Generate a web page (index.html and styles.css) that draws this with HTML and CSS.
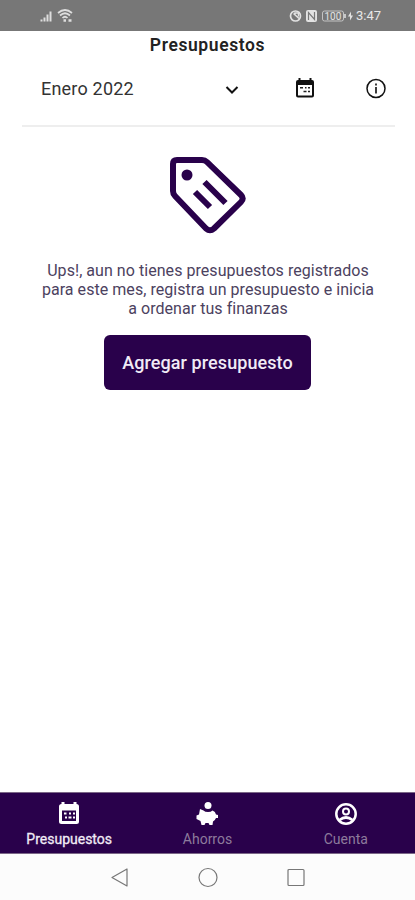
FILE: index.html
```html
<!DOCTYPE html>
<html lang="es">
<head>
<meta charset="utf-8">
<meta name="viewport" content="width=device-width, initial-scale=1">
<title>Presupuestos</title>
<link rel="stylesheet" href="styles.css">
</head>
<body>
<div class="screen">
  <div class="status">
    <svg class="signals" width="34" height="18" viewBox="0 0 34 18" fill="none" stroke="#dedede">
      <path d="M1.500 12.500v2M4.500 10.500v4M7.500 7.500v7M10.500 4.500v10" stroke-width="2"/>
      <path d="M18 6q7-6 14 0M20 8.500q5-4.500 10 0M22.500 11q2.500-2.500 5 0" stroke-width="1.700"/>
      <path d="M23.500 13.500h2.500M28.500 13.500h3" stroke-width="2.500"/>
    </svg>
    <div class="status-right">
      <svg width="66" height="16" viewBox="0 0 66 16" fill="none" stroke="#e2e2e2">
        <circle cx="6.500" cy="8" r="5" stroke-width="1.700"/>
        <path d="M4.500 5.500l5.500 5M6 8V5h3.500v3.500" stroke-width="1.500"/>
        <rect x="17" y="2" width="11" height="12" rx="2" fill="#e2e2e2" stroke="none"/>
        <path d="M19.500 12V4.500l6 7V4" stroke="#777" stroke-width="1.200"/>
        <rect x="33.500" y="3" width="21" height="10" rx="2" stroke-width="1" stroke="#c4c4c4"/>
        <path d="M56 6v4" stroke-width="1.500"/>
        <text x="35.500" y="11.500" class="battery">100</text>
        <path d="M62 3.500l-3 5h2v4l3-5h-2z" fill="#e2e2e2" stroke="none"/>
      </svg>
      <span class="clock">3:47</span>
    </div>
  </div>
  <h1 class="title">Presupuestos</h1>
  <div class="filter">
    <span class="month">Enero 2022</span>
    <svg class="chevron" width="14" height="10" viewBox="0 0 14 10"><path d="M1.500 3l5.500 5.500L12.500 3" fill="none" stroke="#111" stroke-width="2"/></svg>
    <svg class="calendar" width="20" height="22" viewBox="0 0 20 22">
      <path fill="#111" fill-rule="evenodd" d="M3.500 0h2v2h9V0h2v2h.5q2 0 2 2v13.500q0 2-2 2H3q-2 0-2-2V4q0-2 2-2h.500zM3 7v10.500h14V7z"/>
      <path d="M5 9.700h3M10 9.700h1.500M13 9.700h2M8.500 13.500h3M13 13.500h2" stroke="#222" stroke-width="1.500"/>
    </svg>
    <svg class="info" width="22" height="22" viewBox="0 0 22 22"><circle cx="11" cy="10.500" r="9" fill="none" stroke="#111" stroke-width="1.500"/><path d="M11 5.500v2M11 9v6.500" stroke="#333" stroke-width="1.900"/></svg>
  </div>
  <main class="empty">
    <svg class="tag" width="80" height="80" viewBox="0 0 80 80" fill="none" stroke="#29014b">
      <path d="M9 5H34q3 0 5 2L73 40q3.500 3.500 0 7L46 73.500q-4 3.500-8 0L7 41q-2-2-2-5V9q0-4 4-4z" stroke-width="6" stroke-linejoin="round"/>
      <circle cx="19" cy="20" r="5.500" fill="#29014b" stroke="none"/>
      <path d="M27 37L42 52M36.500 27L57.500 48" stroke-width="6"/>
    </svg>
    <p class="message">Ups!, aun no tienes presupuestos registrados<br>para este mes, registra un presupuesto e inicia<br>a ordenar tus finanzas</p>
    <button class="add">Agregar presupuesto</button>
  </main>
  <nav class="tabs">
    <div class="tab active">
      <svg width="24" height="26" viewBox="0 0 24 26"><path fill="#fff" fill-rule="evenodd" d="M4.500 1h3v2h9V1h3v2q2.500 0 2.500 2.500v15q0 2.500-2.500 2.500h-15q-2.500 0-2.500-2.500v-15Q2 3 4.500 3zM5 9.500V20h14V9.500z"/><path d="M7 12.500h2.500M12 12.500h2M16 12.500h2M8 16.500h2M11.500 16.500h3M16 16.500h2" stroke="#fff" stroke-width="2"/></svg>
      <span>Presupuestos</span>
    </div>
    <div class="tab">
      <svg width="24" height="26" viewBox="0 0 24 26" fill="#fff"><circle cx="13" cy="4.500" r="3.500"/><path d="M5 8l3.500 1.500q1.500 1.500 4.500 1.500t4.500-1.500q3 1 3.500 4l2 .5v3h-2q-1 2.500-3 3.500L17.500 24h-3l-1-2h-3L9.500 24h-3l-1-4-4-2v-3.500l2.500-1z"/></svg>
      <span>Ahorros</span>
    </div>
    <div class="tab">
      <svg width="24" height="26" viewBox="0 0 24 26" fill="none" stroke="#fff"><circle cx="12" cy="13" r="9.700" stroke-width="2.500"/><circle cx="12" cy="10.500" r="3" stroke-width="2"/><path d="M5.500 19q6.500-5 13 0" stroke-width="2.700"/></svg>
      <span>Cuenta</span>
    </div>
  </nav>
  <div class="system">
    <svg width="196" height="22" viewBox="0 0 196 22" fill="none" stroke="#777" stroke-width="1.200"><path d="M17 2v17L2 10.500z" stroke-linejoin="round"/><circle cx="98" cy="10.500" r="9"/><rect x="178" y="2.500" width="16" height="16" rx="1"/></svg>
  </div>
</div>
</body>
</html>
```
FILE: styles.css
```css
* { box-sizing: border-box; }
body { margin: 0; background: #fff; font-family: Roboto, sans-serif; }
.screen { width: 415px; height: 900px; display: flex; flex-direction: column; overflow: hidden; }
.status { height: 31px; background: #777; display: flex; justify-content: space-between; padding: 7px 34px 0 40px; flex: none; }
.status-right { display: flex; align-items: center; height: 18px; gap: 1px; }
.clock { font-size: 13px; line-height: 18px; color: #e8e8e8; }
.battery { font: 10px Roboto, sans-serif; fill: #e2e2e2; stroke: none; }
.title { margin: 0; height: 29px; line-height: 29px; font-size: 17.5px; font-weight: 600; letter-spacing: .6px; text-align: center; color: #222; }
.filter { height: 67px; margin: 0 20px 0 22px; padding: 0 8px 8px 19px; border-bottom: 2px solid #eee; display: flex; align-items: center; }
.month { width: 184px; font-size: 18px; letter-spacing: .2px; color: #333; }
.calendar { margin-left: 56px; }
.info { margin-left: auto; }
.empty { flex: 1; display: flex; flex-direction: column; align-items: center; }
.tag { margin-top: 28px; }
.message { margin: 26px 0 0 1px; font-size: 16px; letter-spacing: .05px; line-height: 19px; color: #4c4260; text-align: center; }
.add { margin-top: 17px; width: 207px; height: 55px; border: 0; border-radius: 6px; background: #29014b; color: #f1ebf6; font: 500 18px Roboto, sans-serif; letter-spacing: .08px; }
.tabs { height: 62px; flex: none; display: flex; background: #29014b; border-top: 1px solid #7b6787; border-bottom: 1px solid #7b6787; }
.tab { flex: 1; display: flex; flex-direction: column; align-items: center; padding-top: 8px; color: #8d7b9c; font-size: 14px; line-height: 20px; gap: 2px; }
.active { color: #f1ebf6; -webkit-text-stroke: .3px #f1ebf6; }
.system { height: 46px; flex: none; background: #fcfcfc; display: flex; justify-content: center; padding-top: 13px; }
```
